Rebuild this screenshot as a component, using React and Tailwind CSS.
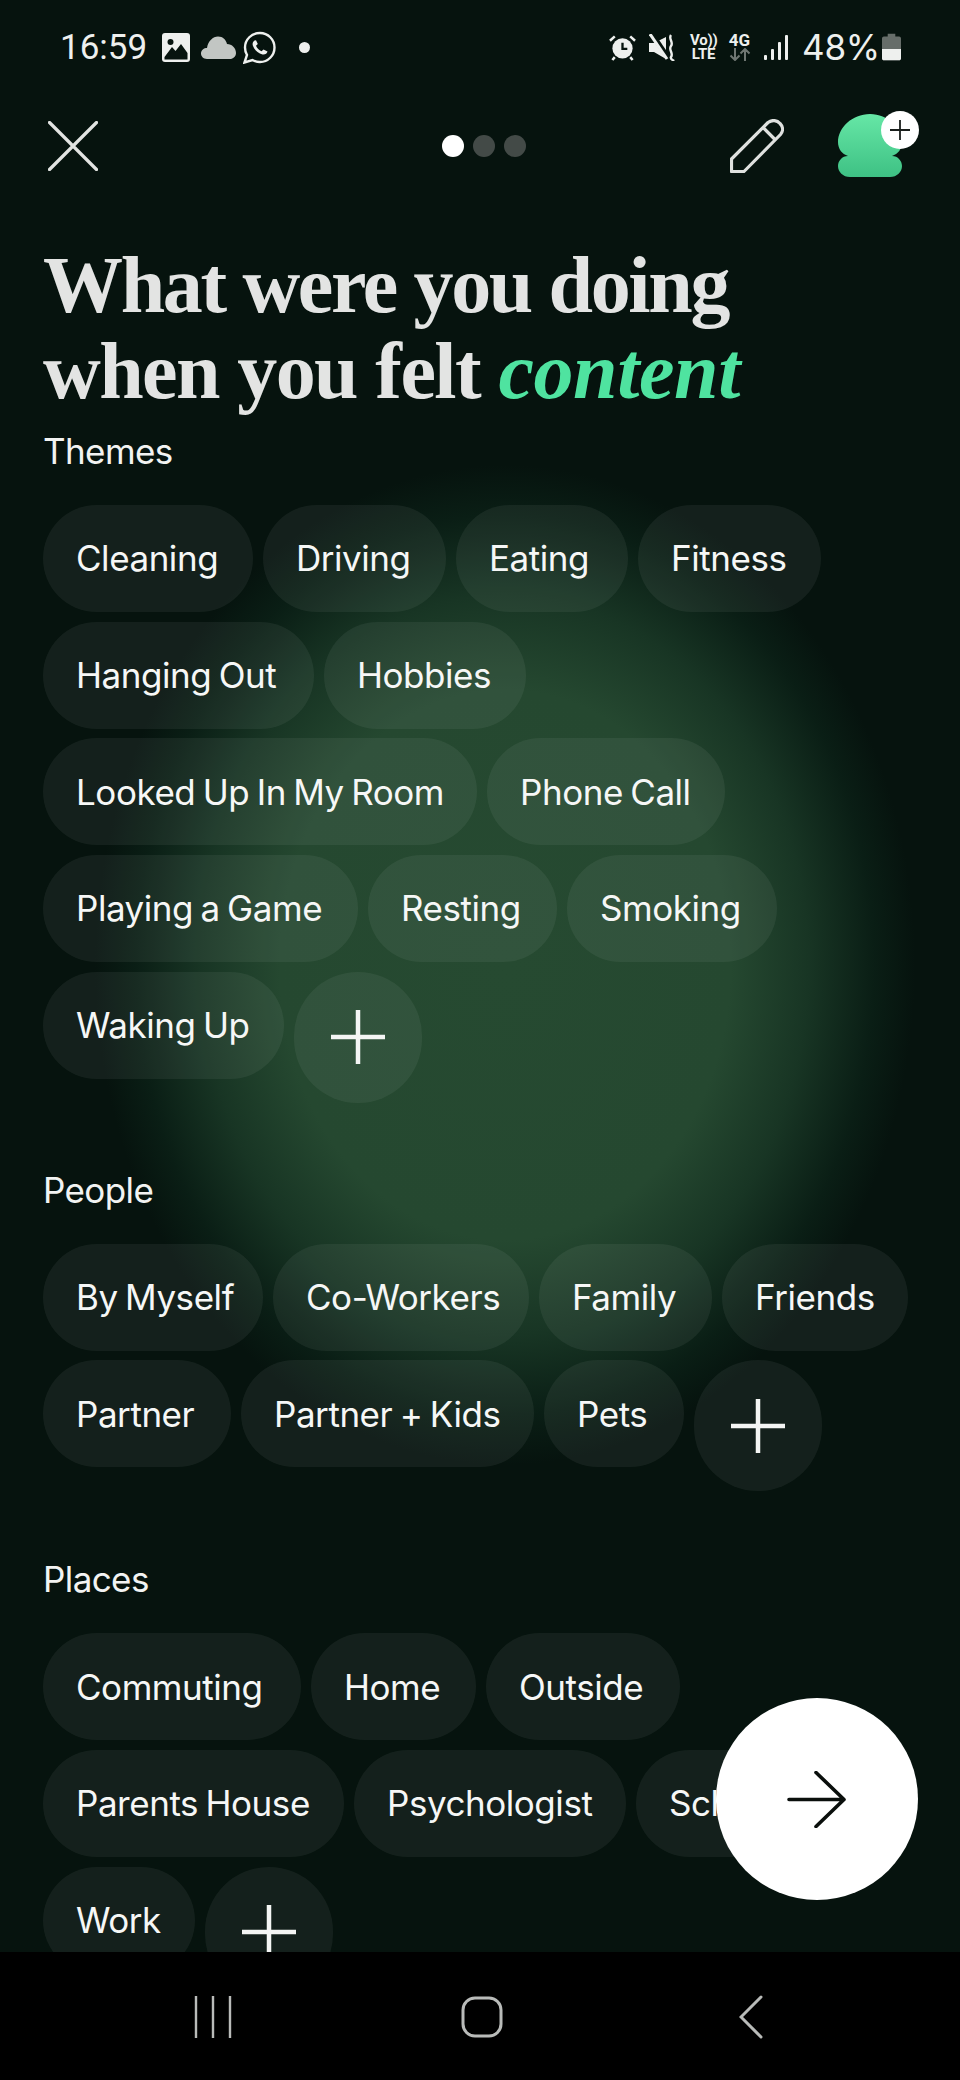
const sans = "font-['Inter','Liberation_Sans',sans-serif]";

function Plus({ size = 54, stroke = 4.5, color = "#f4f5f4" }) {
  return (
    <svg width={size} height={size} viewBox={`0 0 ${size} ${size}`} fill="none" stroke={color} strokeWidth={stroke}>
      <path d={`M${size / 2} 0V${size}M0 ${size / 2}H${size}`} />
    </svg>
  );
}

function Chip({ label, w }) {
  return (
    <div className={`${w} h-[107px] pl-[33px] rounded-full bg-white/[.06] flex items-center justify-start text-[35px] tracking-[-0.45px] [word-spacing:-2px] text-[#f6f7f6] whitespace-nowrap shrink-0`}>
      {label}
    </div>
  );
}

function AddChip() {
  return (
    <div className="w-[128px] h-[131px] rounded-full bg-white/[.06] flex items-center justify-center">
      <Plus />
    </div>
  );
}

function Section({ title, chips, className }) {
  return (
    <section className={className}>
      <h2 className="text-[35px] leading-[44px] tracking-[-0.6px] text-[#f2f3f2] mb-[32px]">{title}</h2>
      <div className="flex flex-wrap gap-x-[10px] gap-y-[9.700px] items-start w-[880px]">
        {chips.map(([c, w]) => (
          <Chip key={c} label={c} w={w} />
        ))}
        <AddChip />
      </div>
    </section>
  );
}

function StatusLeft() {
  return (
    <div className="flex items-center">
      <span className="font-['Roboto',sans-serif] text-[35px] leading-none text-[#eef0ee] w-[102px]">16:59</span>
      <svg width="28" height="29" viewBox="0 0 28 29" className="mr-[11px]">
        <rect x="0" y="0" width="28" height="29" rx="3" fill="#eef0ee" />
        <circle cx="8.500" cy="9" r="3" fill="#07140f" />
        <path d="M2.500 24L10 14L13.500 18L19 11L25.500 20V26.500H2.500Z" fill="#07140f" />
      </svg>
      <svg width="35" height="23" viewBox="0 0 35 23" className="mr-[7px]">
        <path d="M6 23C2 23 0 20 0 17.500C0 14 3 12 6 12C7 5 12 0.500 17 0.500C22 0.500 25 4 26 8C31 8 35 12 35 17C35 20.500 32 23 29 23Z" fill="#c2c6c3" />
      </svg>
      <svg width="33" height="33" viewBox="0 0 33 33" fill="none" className="mr-[23px]">
        <path d="M1.500 31.500L4 24C2.500 21.500 2 19 2 16.500C2 8.500 8.500 2 17 2C25 2 31.500 8.500 31.500 16.500C31.500 24.500 25 31 17 31C14 31 12 30.300 9.500 29Z" stroke="#eef0ee" strokeWidth="2.400" />
        <path d="M11.500 9.500C10 10.500 9 12.500 10 15C11.500 19 15 22.500 19.500 23.500C22 24 24 22.500 24.500 20.500L20.500 18.500L18.500 20.200C16 19.200 14 17 13 14.800L14.800 13L13 9.200Z" fill="#eef0ee" />
      </svg>
      <span className="w-[11px] h-[11px] rounded-full bg-[#eef0ee]" />
    </div>
  );
}

function StatusRight() {
  return (
    <div className="flex items-center">
      <svg width="27" height="27" viewBox="0 0 28 28" className="mr-[13px]">
        <circle cx="14" cy="15" r="10.500" fill="#eef0ee" />
        <path d="M14 9V15.500H19" stroke="#07140f" strokeWidth="2.400" fill="none" />
        <path d="M1 7L6 2.500M27 7L22 2.500M6 24L3.500 27M22 24L24.500 27" stroke="#eef0ee" strokeWidth="2.600" />
      </svg>
      <svg width="27" height="27" viewBox="0 0 27 27" fill="none" className="mr-[14px]">
        <path d="M0 9H5L17 3V25L5 18H0Z" fill="#eef0ee" />
        <path d="M3 0L20 25" stroke="#07140f" strokeWidth="5" />
        <path d="M1 0L18 25" stroke="#eef0ee" strokeWidth="3" />
        <path d="M22 1C19 5 25 8 22 12C19 16 25 19 22 23C21 25 24 26 25 27" stroke="#eef0ee" strokeWidth="2.400" />
      </svg>
      <div className="w-[27px] mr-[11px] font-['Roboto',sans-serif] font-bold text-[15px] leading-[14px] text-[#eef0ee] text-center tracking-[-0.2px]">
        <div>Vo))</div>
        <div>LTE</div>
      </div>
      <div className="w-[23px] mr-[12px] flex flex-col items-center">
        <span className="font-['Roboto',sans-serif] font-bold text-[17px] leading-[15px] text-[#eef0ee]">4G</span>
        <svg width="22" height="13" viewBox="0 0 22 13" fill="none" stroke="#6f7672" strokeWidth="2">
          <path d="M6 0V12M1.500 7.500L6 12L10.500 7.500M16 13V1M11.500 5.500L16 1L20.500 5.500" />
        </svg>
      </div>
      <svg width="26" height="27" viewBox="0 0 26 27" className="mr-[13px]" fill="#eef0ee">
        <rect x="1" y="21" width="3" height="5" rx="1" />
        <rect x="8" y="15" width="3" height="11" rx="1" />
        <rect x="15" y="8" width="3" height="18" rx="1" />
        <rect x="22" y="1" width="3" height="25" rx="1" />
      </svg>
      <span className="text-[35px] tracking-[-0.2px] leading-none text-[#eef0ee] w-[80px] whitespace-nowrap">48%</span>
      <svg width="19" height="28" viewBox="0 0 20 28">
        <path d="M6 0H14V3H18C19 3 20 4 20 5V26C20 27 19 28 18 28H2C1 28 0 27 0 26V5C0 4 1 3 2 3H6Z" fill="#666d69" />
        <path d="M0 16H20V26C20 27 19 28 18 28H2C1 28 0 27 0 26Z" fill="#eef0ee" />
      </svg>
    </div>
  );
}

function Header() {
  return (
    <div className="flex items-center justify-between h-[70px] pl-[48px] pr-[58px] mt-[64px] relative">
      <svg width="50" height="50" viewBox="0 0 50 50" stroke="#e2e4e2" strokeWidth="3.200" strokeLinecap="round">
        <path d="M1.500 1.500L48.500 48.500M48.500 1.500L1.500 48.500" />
      </svg>
      <div className="flex gap-[9px] ml-[140px]">
        <span className="w-[22px] h-[22px] rounded-full bg-white" />
        <span className="w-[22px] h-[22px] rounded-full bg-[#434a47]" />
        <span className="w-[22px] h-[22px] rounded-full bg-[#434a47]" />
      </div>
      <div className="flex items-center gap-[54px]">
        <svg width="54" height="54" viewBox="0 0 54 54" fill="none" stroke="#dfe1df" strokeWidth="3.200">
          <path d="M1.500 40L38 3.500C42 0.500 47 1 50 4.500C53 7.500 53.500 12 50.500 15.500L14 52.500H1.500Z" strokeLinejoin="round" />
          <path d="M33 8.500L45.500 21" />
        </svg>
        <div className="relative w-[64px] h-[64px]">
          <svg width="64" height="64" viewBox="0 0 64 64">
            <defs>
              <linearGradient id="blob" x1="0" y1="0" x2="0" y2="1">
                <stop offset="0" stopColor="#66e7a6" />
                <stop offset="1" stopColor="#3ec184" />
              </linearGradient>
            </defs>
            <path d="M32 0C50 0 64 14 64 28C64 35 60 40 54 42C60 42 64 47 64 52C64 58 59 63 52 63H12C5 63 0 58 0 52C0 47 4 42 10 42C4 40 0 35 0 28C0 14 14 0 32 0Z" fill="url(#blob)" />
          </svg>
          <div className="absolute -top-[3px] -right-[17px] w-[38px] h-[38px] rounded-full bg-white flex items-center justify-center">
            <Plus size={20} stroke={1.800} color="#1a1f1c" />
          </div>
        </div>
      </div>
    </div>
  );
}

export default function App() {
  return (
    <div className={`relative w-[960px] h-[2080px] overflow-hidden flex flex-col bg-[#06130e] ${sans}`}>
      <div className="absolute inset-0 bg-[radial-gradient(ellipse_410px_500px_at_505px_965px,#264a31_0%,#254830_55%,#183524_74%,#0a1e15_90%,transparent_100%)]" />
      <main className="relative flex-1 min-h-0 overflow-hidden">
        <div className="h-[30px]" />
        <div className="flex items-center justify-between pl-[60px] pr-[59px] h-[34px]">
          <StatusLeft />
          <StatusRight />
        </div>
        <div className="-mt-[17px]"><Header /></div>
        <div className="pl-[43px]">
          <h1 className="font-['Liberation_Serif',serif] font-bold text-[80px] leading-[86px] text-[#e3e4e3] mt-[61px] whitespace-nowrap">
            <span className="block tracking-[-2.350px]">What were you doing</span>
            <span className="block tracking-[-1.600px]">when you felt <em className="text-[#4fe3a0] tracking-[-0.400px]">content</em></span>
          </h1>
          <Section
            className="mt-[15px]"
            title="Themes"
            chips={[["Cleaning","w-[210px]"],["Driving","w-[183px]"],["Eating","w-[172px]"],["Fitness","w-[183px]"],["Hanging Out","w-[271px]"],["Hobbies","w-[202px]"],["Looked Up In My Room","w-[434px]"],["Phone Call","w-[238px]"],["Playing a Game","w-[315px]"],["Resting","w-[189px]"],["Smoking","w-[210px]"],["Waking Up","w-[241px]"]]}
          />
          <Section
            className="mt-[65px]"
            title="People"
            chips={[["By Myself","w-[220px]"],["Co-Workers","w-[256px]"],["Family","w-[173px]"],["Friends","w-[186px]"],["Partner","w-[188px]"],["Partner + Kids","w-[293px]"],["Pets","w-[140px]"]]}
          />
          <Section
            className="mt-[66px]"
            title="Places"
            chips={[["Commuting","w-[258px]"],["Home","w-[165px]"],["Outside","w-[194px]"],["Parents House","w-[301px]"],["Psychologist","w-[272px]"],["School","w-[200px]"],["Work","w-[152px]"]]}
          />
        </div>
      </main>
      <div className="absolute right-[42px] top-[1698px] w-[202px] h-[202px] rounded-full bg-white flex items-center justify-center">
        <svg width="60" height="57" viewBox="0 0 60 57" fill="none" stroke="#0a0f0c" strokeWidth="3.600" strokeLinecap="round" strokeLinejoin="round">
          <path d="M2 28.500H57M29 1.500L57 28.500L29 55.500" />
        </svg>
      </div>
      <nav className="relative h-[128px] shrink-0 bg-black">
        <div className="flex items-center justify-between pt-[43px] pl-[194px] pr-[197px]">
          <svg width="38" height="42" viewBox="0 0 38 42" stroke="#b9bbb9" strokeWidth="2.400">
            <path d="M2 0V42M19 0V42M36 0V42" />
          </svg>
          <svg width="42" height="42" viewBox="0 0 42 42" fill="none" stroke="#b9bbb9" strokeWidth="3" className="mr-[8px]">
            <rect x="2" y="2" width="38" height="38" rx="12" />
          </svg>
          <svg width="24" height="44" viewBox="0 0 24 44" fill="none" stroke="#b9bbb9" strokeWidth="3" strokeLinecap="round">
            <path d="M22 2L2 22L22 42" />
          </svg>
        </div>
      </nav>
    </div>
  );
}
